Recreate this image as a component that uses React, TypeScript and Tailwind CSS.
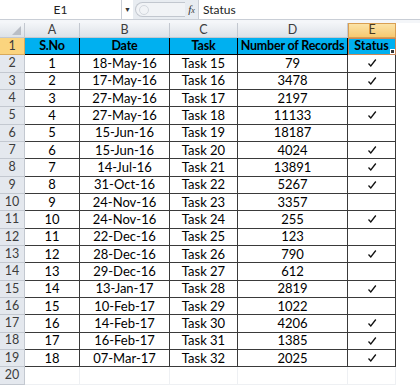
import React from "react";

interface Row {
  no: number;
  date: string;
  task: string;
  records: number;
  done: boolean;
}

const rows: Row[] = [
  { no: 1, date: "18-May-16", task: "Task 15", records: 79, done: true },
  { no: 2, date: "17-May-16", task: "Task 16", records: 3478, done: true },
  { no: 3, date: "27-May-16", task: "Task 17", records: 2197, done: false },
  { no: 4, date: "27-May-16", task: "Task 18", records: 11133, done: true },
  { no: 5, date: "15-Jun-16", task: "Task 19", records: 18187, done: false },
  { no: 6, date: "15-Jun-16", task: "Task 20", records: 4024, done: true },
  { no: 7, date: "14-Jul-16", task: "Task 21", records: 13891, done: true },
  { no: 8, date: "31-Oct-16", task: "Task 22", records: 5267, done: true },
  { no: 9, date: "24-Nov-16", task: "Task 23", records: 3357, done: false },
  { no: 10, date: "24-Nov-16", task: "Task 24", records: 255, done: true },
  { no: 11, date: "22-Dec-16", task: "Task 25", records: 123, done: false },
  { no: 12, date: "28-Dec-16", task: "Task 26", records: 790, done: true },
  { no: 13, date: "29-Dec-16", task: "Task 27", records: 612, done: false },
  { no: 14, date: "13-Jan-17", task: "Task 28", records: 2819, done: true },
  { no: 15, date: "10-Feb-17", task: "Task 29", records: 1022, done: false },
  { no: 16, date: "14-Feb-17", task: "Task 30", records: 4206, done: true },
  { no: 17, date: "16-Feb-17", task: "Task 31", records: 1385, done: true },
  { no: 18, date: "07-Mar-17", task: "Task 32", records: 2025, done: true },
];

const cols = "grid grid-cols-[25px_55px_90px_68px_110px_48px_1fr] overflow-hidden whitespace-nowrap leading-none";
const cell = "flex items-center justify-center border-r border-b border-[#3a3a3a]";

const Check = () => (
  <svg width="10" height="10" viewBox="0 0 10 10">
    <path d="M1.5 5.5 L3.8 8 L8.8 1.5" fill="none" stroke="#111" strokeWidth="1.3" />
  </svg>
);

const App: React.FC = () => {
  return (
    <div className="w-[420px] h-[385px] overflow-hidden bg-white text-[13px] text-black" style={{ fontFamily: "Lato, 'Liberation Sans', sans-serif" }}>
      {/* formula bar */}
      <div className="flex h-[20px] bg-[#e8ecf1] border-b border-[#c9ced6]">
        <div className="w-[122px] bg-white border-r border-[#c9ced6] flex items-center justify-center text-[12px] text-[#222]">E1</div>
        <div className="w-[11px] bg-white flex items-center justify-center text-[7px] text-[#333]">▼</div>
        <div className="w-[50px] ml-[2px] my-[2px] rounded-l-full border border-r-0 border-[#c2c7cf] bg-[#f1f3f6] relative">
          <div className="absolute left-[3px] top-[2px] w-[10px] h-[10px] rounded-full border border-[#d3d7dd]" />
        </div>
        <div className="w-[13px] flex items-center justify-center italic text-[11px] text-[#333]" style={{ fontFamily: "'Liberation Serif', serif" }}>
          f<span className="text-[8px] mt-[3px]">x</span>
        </div>
        <div className="flex-1 bg-white border-l border-[#c9ced6] flex items-center pl-[4px] text-[12px] text-[#222]">Status</div>
      </div>
      <div className="h-[3px] bg-[#f4f6f9]" />

      {/* column headers */}
      <div className={`${cols} h-[15px] text-[12.5px] text-[#3c3c3c]`}>
        <div className="relative bg-gradient-to-b from-[#f3f5f8] to-[#dde2e8] border-r border-b border-[#c3c8d0]">
          <svg className="absolute right-[3px] bottom-[2px]" width="9" height="9" viewBox="0 0 9 9">
            <path d="M9 0 L9 9 L0 9 Z" fill="#b9bec6" />
          </svg>
        </div>
        {["A", "B", "C", "D"].map((c) => (
          <div key={c} className="flex items-center justify-center bg-gradient-to-b from-[#f3f5f8] to-[#dde2e8] border-r border-b border-[#c3c8d0]">
            {c}
          </div>
        ))}
        <div className="flex items-center justify-center bg-gradient-to-b from-[#fbe3a6] to-[#f6c96f] border border-[#d99f52] text-[#4a3a20]">E</div>
        <div className="bg-white" />
      </div>

      {/* header row */}
      <div className={`${cols} h-[17.33px]`}>
        <div className="flex items-center justify-center bg-[#fbd47e] border-r border-b border-[#d8a95a] text-[12.5px] text-[#3c3c3c]">1</div>
        {["S.No", "Date", "Task", "Number of Records"].map((h) => (
          <div key={h} className="flex items-center justify-center bg-[#00b0f0] border-r border-b border-black font-bold text-[12.5px] tracking-[-0.2px]">
            {h}
          </div>
        ))}
        <div className="relative flex items-center justify-center bg-[#00b0f0] border-r border-b border-black font-bold text-[12.5px] outline outline-[1.5px] outline-[#c8875a] -outline-offset-1">
          Status
          <div className="absolute right-0 bottom-0 w-[5px] h-[5px] bg-[#333] border border-white" />
        </div>
        <div className="bg-white" />
      </div>

      {rows.map((r) => (
        <div key={r.no} className={`${cols} h-[17.33px]`}>
          <div className="flex items-center justify-center bg-[#e4e8ee] border-r border-b border-[#c3c8d0] text-[12.5px] text-[#3c3c3c]">{r.no + 1}</div>
          <div className={cell}>{r.no}</div>
          <div className={cell}>{r.date}</div>
          <div className={cell}>{r.task}</div>
          <div className={cell}>{r.records}</div>
          <div className={cell}>{r.done ? <Check /> : null}</div>
          <div className="bg-white" />
        </div>
      ))}

      {/* empty row 20 */}
      <div className={`${cols} h-[17.33px]`}>
        <div className="flex items-center justify-center bg-[#e4e8ee] border-r border-b border-[#c3c8d0] text-[12.5px] text-[#3c3c3c]">20</div>
        <div className="border-r border-b border-[#eef0f3]" />
        <div className="border-r border-b border-[#eef0f3]" />
        <div className="border-r border-b border-[#eef0f3]" />
        <div className="border-r border-b border-[#eef0f3]" />
        <div className="border-r border-b border-[#eef0f3]" />
        <div />
      </div>
    </div>
  );
};

export default App;
